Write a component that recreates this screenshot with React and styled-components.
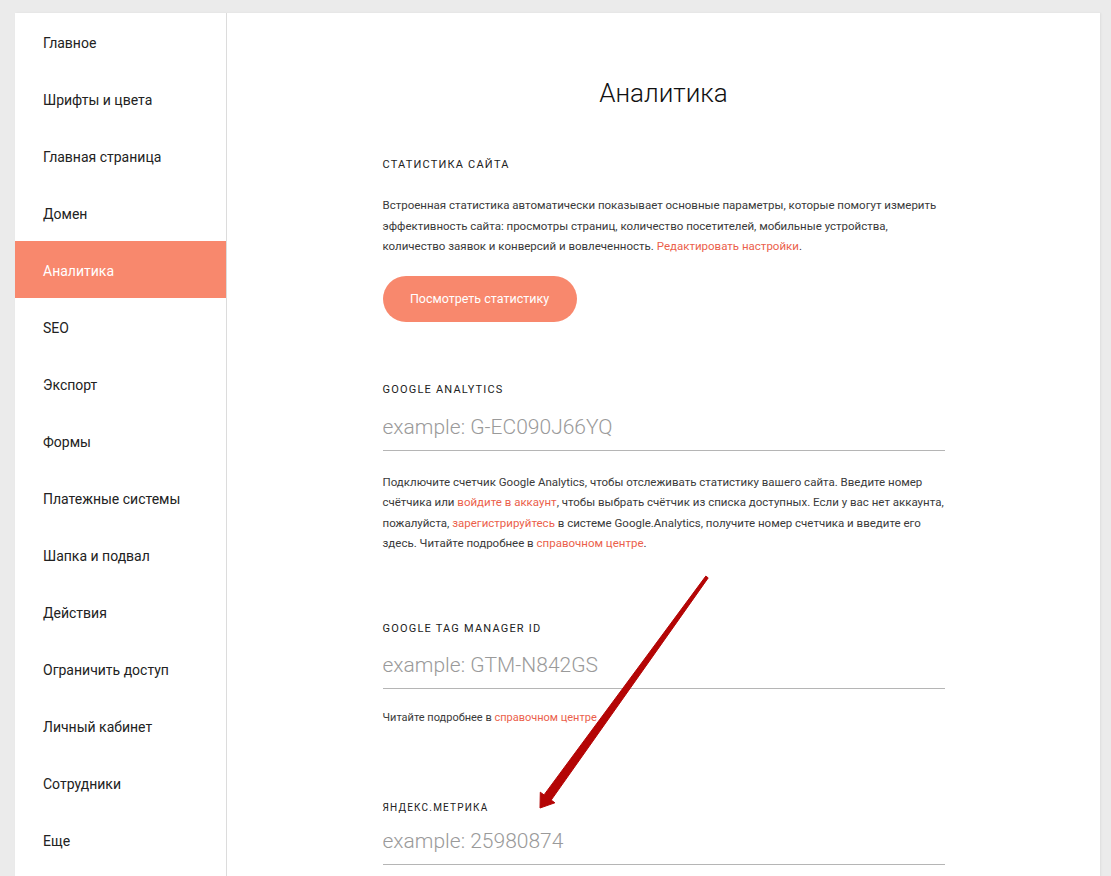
import styled, { createGlobalStyle } from "styled-components";

const GlobalStyle = createGlobalStyle`
	html, body {
		margin: 0;
		padding: 0;
		background: #ebebeb;
		font-family: Roboto, "Noto Sans", Arial, sans-serif;
		color: #222;
		overflow: hidden;
	}
`;

const Page = styled.div`
	position: relative;
	padding: 13px 11px 0 15px;
	min-height: 100vh;
	box-sizing: border-box;
`;

const Panel = styled.div`
	display: flex;
	background: #fff;
	min-height: 900px;
	box-shadow: 1px 0 2px rgba(0, 0, 0, 0.06);
`;

const Sidebar = styled.nav`
	width: 211px;
	flex-shrink: 0;
	border-right: 1px solid #dcdcdc;
	display: flex;
	flex-direction: column;
`;

const NavItem = styled.div`
	height: 57px;
	box-sizing: border-box;
	display: flex;
	align-items: center;
	padding: 2px 0 0 28px;
	font-size: 14px;
	color: ${(p) => (p.$active ? "#fff" : "#222")};
	background: ${(p) => (p.$active ? "#f8886d" : "transparent")};
	cursor: pointer;
`;

const Main = styled.main`
	flex: 1;
	display: flex;
	flex-direction: column;
	align-items: center;
	padding-top: 63px;
`;

const Column = styled.div`
	width: 562px;
`;

const Title = styled.h1`
	margin: 0 0 48px;
	font-size: 26px;
	line-height: 34px;
	font-weight: 300;
	text-align: center;
	color: #111;
`;

const Section = styled.section`
	margin-bottom: ${(p) => p.$gap}px;
`;

const Label = styled.div`
	font-size: ${(p) => p.$size || 11}px;
	line-height: 14px;
	letter-spacing: 1.2px;
	text-transform: uppercase;
	color: #222;
`;

const Text = styled.p`
	margin: ${(p) => p.$top}px 0 0;
	font-size: ${(p) => p.$size || 11.5}px;
	line-height: 20.5px;
	color: #3a3a3a;
	white-space: nowrap;
`;

const Link = styled.a`
	color: #eb5f4c;
	text-decoration: none;
	cursor: pointer;
`;

const Button = styled.button`
	margin-top: 19px;
	height: 46px;
	width: 194px;
	border: none;
	border-radius: 23px;
	background: #f8886d;
	color: #fff;
	font-family: inherit;
	font-size: 12.5px;
	cursor: pointer;
`;

const Input = styled.input`
	display: block;
	width: 100%;
	box-sizing: content-box;
	margin-top: ${(p) => p.$top}px;
	height: 30px;
	padding: 0 0 8px;
	border: none;
	border-bottom: 1px solid #b5b5b5;
	outline: none;
	font-family: inherit;
	font-size: 21px;
	font-weight: 300;
	color: #222;
	&::placeholder {
		color: #9a9a9a;
	}
`;

const Arrow = styled.svg`
	position: absolute;
	left: 0;
	top: 0;
	pointer-events: none;
`;

const navItems = [
	"Главное",
	"Шрифты и цвета",
	"Главная страница",
	"Домен",
	"Аналитика",
	"SEO",
	"Экспорт",
	"Формы",
	"Платежные системы",
	"Шапка и подвал",
	"Действия",
	"Ограничить доступ",
	"Личный кабинет",
	"Сотрудники",
	"Еще",
];

export default function App() {
	return (
		<Page>
			<GlobalStyle />
			<Panel>
				<Sidebar>
					{navItems.map((item) => (
						<NavItem key={item} $active={item === "Аналитика"}>
							{item}
						</NavItem>
					))}
				</Sidebar>
				<Main>
					<Column>
						<Title>Аналитика</Title>

						<Section $gap={61}>
							<Label>Статистика сайта</Label>
							<Text $top={23}>
								Встроенная статистика автоматически показывает основные параметры, которые помогут измерить
								<br />
								эффективность сайта: просмотры страниц, количество посетителей, мобильные устройства,
								<br />
								количество заявок и конверсий и вовлеченность. <Link>Редактировать настройки</Link>.
							</Text>
							<Button>Посмотреть статистику</Button>
						</Section>

						<Section $gap={68}>
							<Label>Google Analytics</Label>
							<Input $top={15} placeholder="example: G-EC090J66YQ" />
							<Text $top={21}>
								Подключите счетчик Google Analytics, чтобы отслеживать статистику вашего сайта. Введите номер
								<br />
								счётчика или <Link>войдите в аккаунт</Link>, чтобы выбрать счётчик из списка доступных. Если у вас нет аккаунта,
								<br />
								пожалуйста, <Link>зарегистрируйтесь</Link> в системе Google.Analytics, получите номер счетчика и введите его
								<br />
								здесь. Читайте подробнее в <Link>справочном центре</Link>.
							</Text>
						</Section>

						<Section $gap={73}>
							<Label>Google Tag Manager ID</Label>
							<Input $top={14} placeholder="example: GTM-N842GS" />
							<Text $top={19} $size={11}>
								Читайте подробнее в <Link>справочном центре</Link>
							</Text>
						</Section>

						<Section $gap={40}>
							<Label $size={10}>Яндекс.Метрика</Label>
							<Input $top={11} placeholder="example: 25980874" />
						</Section>
					</Column>
				</Main>
			</Panel>
			<Arrow width="1111" height="876" viewBox="0 0 1111 876">
				<polygon
					fill="#b40505"
					stroke="#b40505"
					strokeWidth="1"
					strokeLinejoin="round"
					points="705.8,576.1 544,794.9 540.3,792.2 540,808 554.9,802.8 551.2,800.1 708.2,577.9"
				/>
			</Arrow>
		</Page>
	);
}
